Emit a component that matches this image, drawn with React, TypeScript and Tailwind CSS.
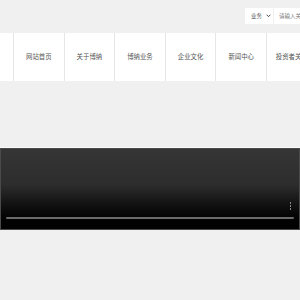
const navItems = ["网站首页", "关于博纳", "博纳业务", "企业文化", "新闻中心", "投资者关系"];

export default function App() {
  return (
    <div className="h-[300px] w-[300px] overflow-hidden bg-[#f0f0f0] font-['Noto_Sans_CJK_SC','Noto_Sans',sans-serif]">
      <div className="flex h-[33px] items-start justify-end pt-[8px]">
        <div className="flex h-[16px] w-[28px] items-center justify-between bg-white pl-[6px] pr-[2px] text-[5.5px] text-[#555]">
          <span>业务</span>
          <svg width="5" height="4" viewBox="0 0 8 6">
            <path d="M1 1l3 3 3-3" fill="none" stroke="#444" strokeWidth="1.6" />
          </svg>
        </div>
        <div className="ml-[1px] flex h-[16px] w-[26px] items-center overflow-hidden whitespace-nowrap bg-white pl-[5px] text-[5.5px] text-[#777]">
          请输入关键字
        </div>
      </div>
      <nav className="flex h-[48px] overflow-hidden whitespace-nowrap bg-white">
        <div className="w-[13px] shrink-0" />
        {navItems.map((item) => (
          <div
            key={item}
            className="flex w-[50.6px] shrink-0 items-center justify-center border-l border-[#e6e6e6] text-[6.4px] text-[#555]"
          >
            {item}
          </div>
        ))}
      </nav>
      <div className="h-[66px]" />
      <div className="h-[1px] bg-[#fafafa]" />
      <div className="relative h-[82px] border border-[#4a4a4a] bg-gradient-to-b from-[#353535] via-[#2d2d2d] via-45% to-[#020202] to-90%">
        <div className="absolute right-[8px] top-[53px] flex flex-col gap-[1px]">
          <span className="h-[2px] w-[1.5px] bg-[#888]" />
          <span className="h-[2px] w-[1.5px] bg-[#888]" />
          <span className="h-[2px] w-[1.5px] bg-[#888]" />
        </div>
        <div className="absolute left-[5px] right-[5px] top-[68px] h-[2px] rounded-full bg-[#6a6a6a]" />
      </div>
    </div>
  );
}
